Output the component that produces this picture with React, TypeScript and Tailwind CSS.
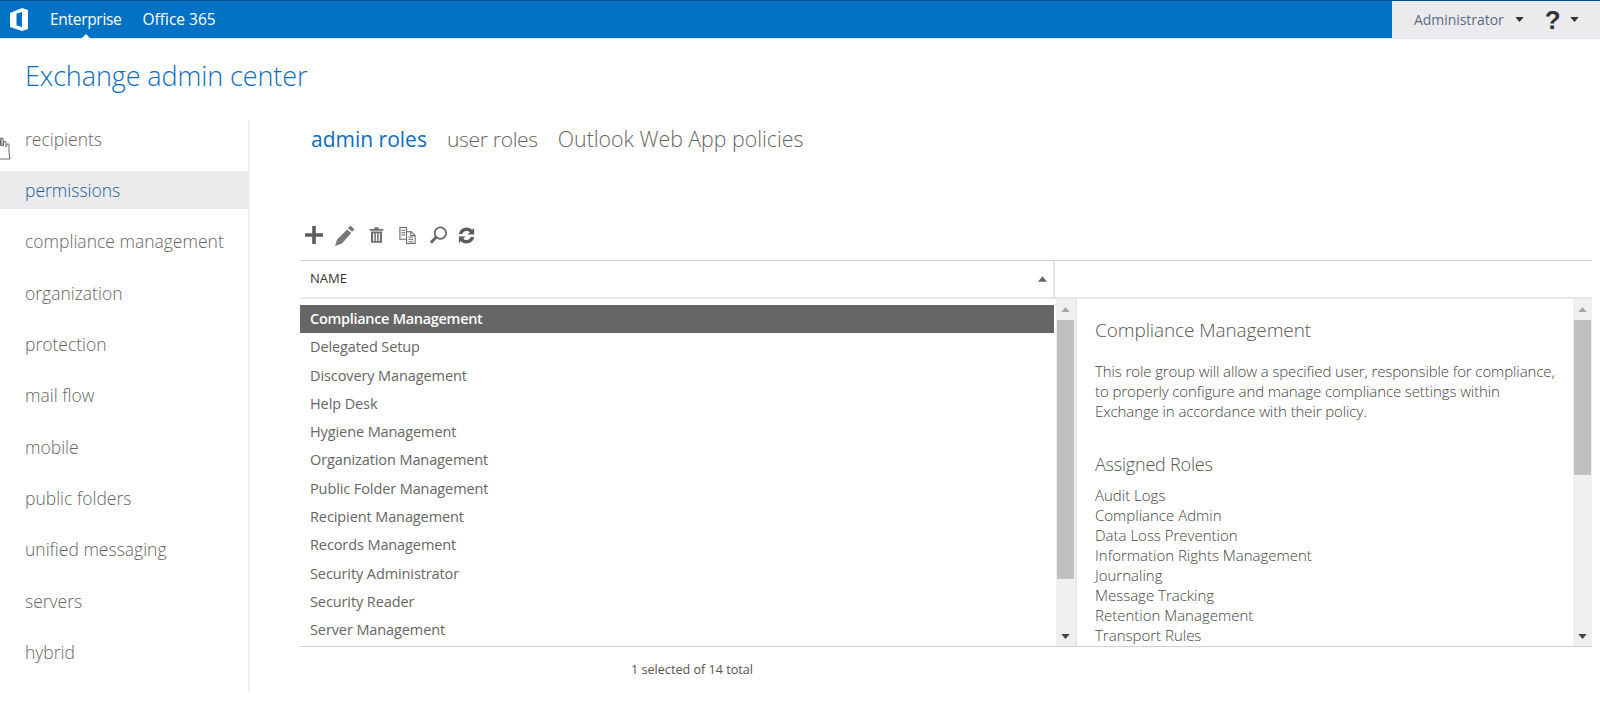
import React from "react";

const F = "[font-family:'Open_Sans','Noto_Sans',sans-serif]";

const nav = ["recipients","permissions","compliance management","organization","protection","mail flow","mobile","public folders","unified messaging","servers","hybrid"];
const rows = ["Delegated Setup","Discovery Management","Help Desk","Hygiene Management","Organization Management","Public Folder Management","Recipient Management","Records Management","Security Administrator","Security Reader","Server Management"];
const roles = ["Audit Logs","Compliance Admin","Data Loss Prevention","Information Rights Management","Journaling","Message Tracking","Retention Management","Transport Rules"];

function Caret({ up, className }: { up?: boolean; className: string }) {
  return (
    <svg viewBox="0 0 10 6" className={className} fill="currentColor">
      <path d={up ? "M5 0L10 6H0Z" : "M0 0H10L5 6Z"} />
    </svg>
  );
}

function Scrollbar({ thumb }: { thumb: string }) {
  return (
    <div className="w-[19px] h-full shrink-0 bg-[#f0f0f0] flex flex-col items-center">
      <div className="h-[21px] shrink-0 flex items-center justify-center">
        <Caret up className="w-[9px] h-[5px] text-[#a6a6a6]" />
      </div>
      <div className={`w-[17px] bg-[#c0c0c0] ${thumb}`} />
      <div className="flex-1" />
      <div className="h-[20px] shrink-0 flex items-center justify-center">
        <Caret className="w-[9px] h-[5px] text-[#444]" />
      </div>
    </div>
  );
}

function Toolbar() {
  return (
    <div className="flex items-center h-[24px] pl-[4px] text-[#5c5c5c]">
      <svg viewBox="0 0 20 20" className="w-[20px] h-[20px]" fill="currentColor"><path d="M8.200 1h3.600v7.200H19v3.600h-7.200V19H8.200v-7.200H1V8.200h7.200z" /></svg>
      <svg viewBox="0 0 20 20" className="w-[21px] h-[21px] ml-[10px] text-[#777]" fill="currentColor"><path d="M15.500 .5l4 3.500-2.200 2.500-4-3.500zM12.500 4.200l4 3.500-9 9.800L1 20l1.800-6z" /></svg>
      <svg viewBox="0 0 20 20" className="w-[17px] h-[18px] ml-[13px] text-[#707070]" fill="currentColor"><path fillRule="evenodd" d="M7.500 1h5v2H18v2H2V3h5.500zM3.500 6h13v13h-13zM6 8v9h1.500V8zm3.250 0v9h1.500V8zM12.500 8v9H14V8z" /></svg>
      <svg viewBox="0 0 20 20" className="w-[19px] h-[19px] ml-[13px] text-[#666]" fill="none" stroke="currentColor" strokeWidth="1.100"><path d="M2 1.500h7v12.500H2zM3.500 4.500h4M3.500 7h4M3.500 9.500h4" /><path d="M9 6h5l4 4v8.500H9z" fill="#fff" /><path d="M11 11.500h5M11 14h5M11 16.500h5M13.500 6v4h4.500" /></svg>
      <svg viewBox="0 0 20 20" className="w-[20px] h-[19px] ml-[11px] text-[#666]" fill="none" stroke="currentColor"><circle cx="12.500" cy="7.500" r="6" strokeWidth="1.800" /><path d="M8.300 11.700L2.500 17.500" strokeWidth="3" /></svg>
      <svg viewBox="0 0 20 20" className="w-[19px] h-[19px] ml-[9px]" fill="currentColor"><path d="M10 1.500a8.500 8.500 0 0 1 6 2.500l2-2v7h-7l2.500-2.500A5 5 0 0 0 5.500 8.500H1.800A8.500 8.500 0 0 1 10 1.500zM2 11h7l-2.500 2.500a5 5 0 0 0 8-2h3.700A8.500 8.500 0 0 1 4 16l-2 2z" /></svg>
    </div>
  );
}

export default function App() {
  return (
    <div className={`relative w-[1600px] h-[701px] bg-white overflow-hidden ${F}`}>
      <header className="relative flex h-[39px] border-t border-[#0a4f8f] border-b border-b-[#dfe7ee] bg-[#0072c6]">
        <div className="flex-1 flex items-center pb-[1px] text-[15.500px] leading-[22px] text-white">
          <svg viewBox="0 0 18 23" className="ml-[10px] w-[18px] h-[23px]" fill="#fff">
            <path fillRule="evenodd" d="M0 5L12 0 18 2V21L12 23 0 19ZM12 4L6.500 5.500V17.500L12 19Z" />
          </svg>
          <span className="ml-[22px] tracking-[-0.3px]">Enterprise</span>
          <span className="ml-[21px]">Office 365</span>
        </div>
        <div className="w-[208px] bg-[#ebebed] flex items-center pl-[22px]">
          <span className="text-[14px] text-[#5c6c88] tracking-[-0.05px]">Administrator</span>
          <Caret className="w-[9px] h-[5px] ml-[11px] text-[#333]" />
          <span className="ml-[21px] text-[26px] leading-none font-bold text-[#333] [font-family:'Liberation_Sans',sans-serif]">?</span>
          <Caret className="w-[9px] h-[5px] ml-[9px] text-[#333]" />
        </div>
        <div className="absolute left-[81px] bottom-[-1px] w-0 h-0 border-x-[5px] border-x-transparent border-b-[5px] border-b-white" />
      </header>

      <h1 className="pl-[25px] pt-[19px] h-[81px] text-[27px] leading-[35px] font-light text-[#0f6cbd] tracking-[-0.1px]">Exchange admin center</h1>

      <div className="flex">
        <nav className="w-[250px] h-[572px] shrink-0 border-r-2 border-[#f0f0f0]">
          {nav.map((n, i) => (
            <div key={n} className={`flex items-center h-[38px] pl-[25px] mb-[13.300px] text-[17.500px] font-light ${i === 1 ? "bg-[#ebebed] text-[#1d5a96]" : "text-[#666]"}`}>{n}</div>
          ))}
        </nav>

        <main className="flex-1 pl-[50px] pr-[8px]">
          <div className="flex h-[103px] pl-[11px] pt-[5px] text-[21px] leading-[28px] font-light">
            <span className="text-[#0f6cbd] font-normal">admin roles</span>
            <span className="ml-[20px] text-[#666] tracking-[-0.3px]">user roles</span>
            <span className="ml-[20px] text-[#666] text-[21.300px]">Outlook Web App policies</span>
          </div>
          <div className="h-[37px]"><Toolbar /></div>

          <div className="flex h-[39px] border-y border-b-2 border-t-[#c9d3da] border-b-[#e8e8e8]">
            <div className="w-[755px] flex items-center justify-between pl-[10px] pr-[6px] border-r-2 border-[#e5e5e5]">
              <span className="text-[13px] text-[#333]">NAME</span>
              <Caret up className="w-[9px] h-[6px] text-[#666]" />
            </div>
          </div>

          <div className="flex h-[348px] border-b border-[#c9d3da]">
            <div className="w-[754px] pt-[6px] overflow-hidden shrink-0">
              <div className="flex items-center h-[28px] pl-[10px] bg-[#666] text-white text-[14.500px] font-semibold tracking-[-0.3px]">Compliance Management</div>
              {rows.map(r => (
                <div key={r} className="flex items-center h-[28.300px] pl-[10px] text-[14.500px] text-[#666] tracking-[-0.1px]">{r}</div>
              ))}
            </div>
            <div className="ml-[2px]"><Scrollbar thumb="h-[259px]" /></div>
            <div className="w-[2px] bg-[#e8e8e8] shrink-0" />
            <div className="flex-1 pl-[18px] pr-[16px] overflow-hidden">
              <div className="pt-[17px] text-[19px] leading-[28px] font-light text-[#555] tracking-[-0.1px]">Compliance Management</div>
              <p className="mt-[17px] text-[15px] leading-[20px] font-light text-[#444] tracking-[-0.1px]">
                This role group will allow a specified user, responsible for compliance,<br />
                to properly configure and manage compliance settings within<br />
                Exchange in accordance with their policy.
              </p>
              <div className="mt-[31px] text-[18px] leading-[24px] font-light text-[#555] tracking-[-0.2px]">Assigned Roles</div>
              <div className="mt-[9px] text-[15px] leading-[20px] font-light text-[#444]">
                {roles.map(r => <div key={r}>{r}</div>)}
              </div>
            </div>
            <Scrollbar thumb="h-[155px]" />
          </div>

          <div className="w-[784px] pt-[14px] text-center text-[12.600px] leading-[17px] text-[#555]">1 selected of 14 total</div>
        </main>
      </div>

      <svg viewBox="0 0 14 28" className="absolute left-0 top-[134px] w-[14px] h-[28px]" fill="#fff" stroke="#444" strokeWidth="0.8">
        <path d="M-2 4h2l1 8V4l2 .3v8l1-5 2 .5v5l1.500-3 1.500.5v8L10 25H-2" />
      </svg>
    </div>
  );
}
